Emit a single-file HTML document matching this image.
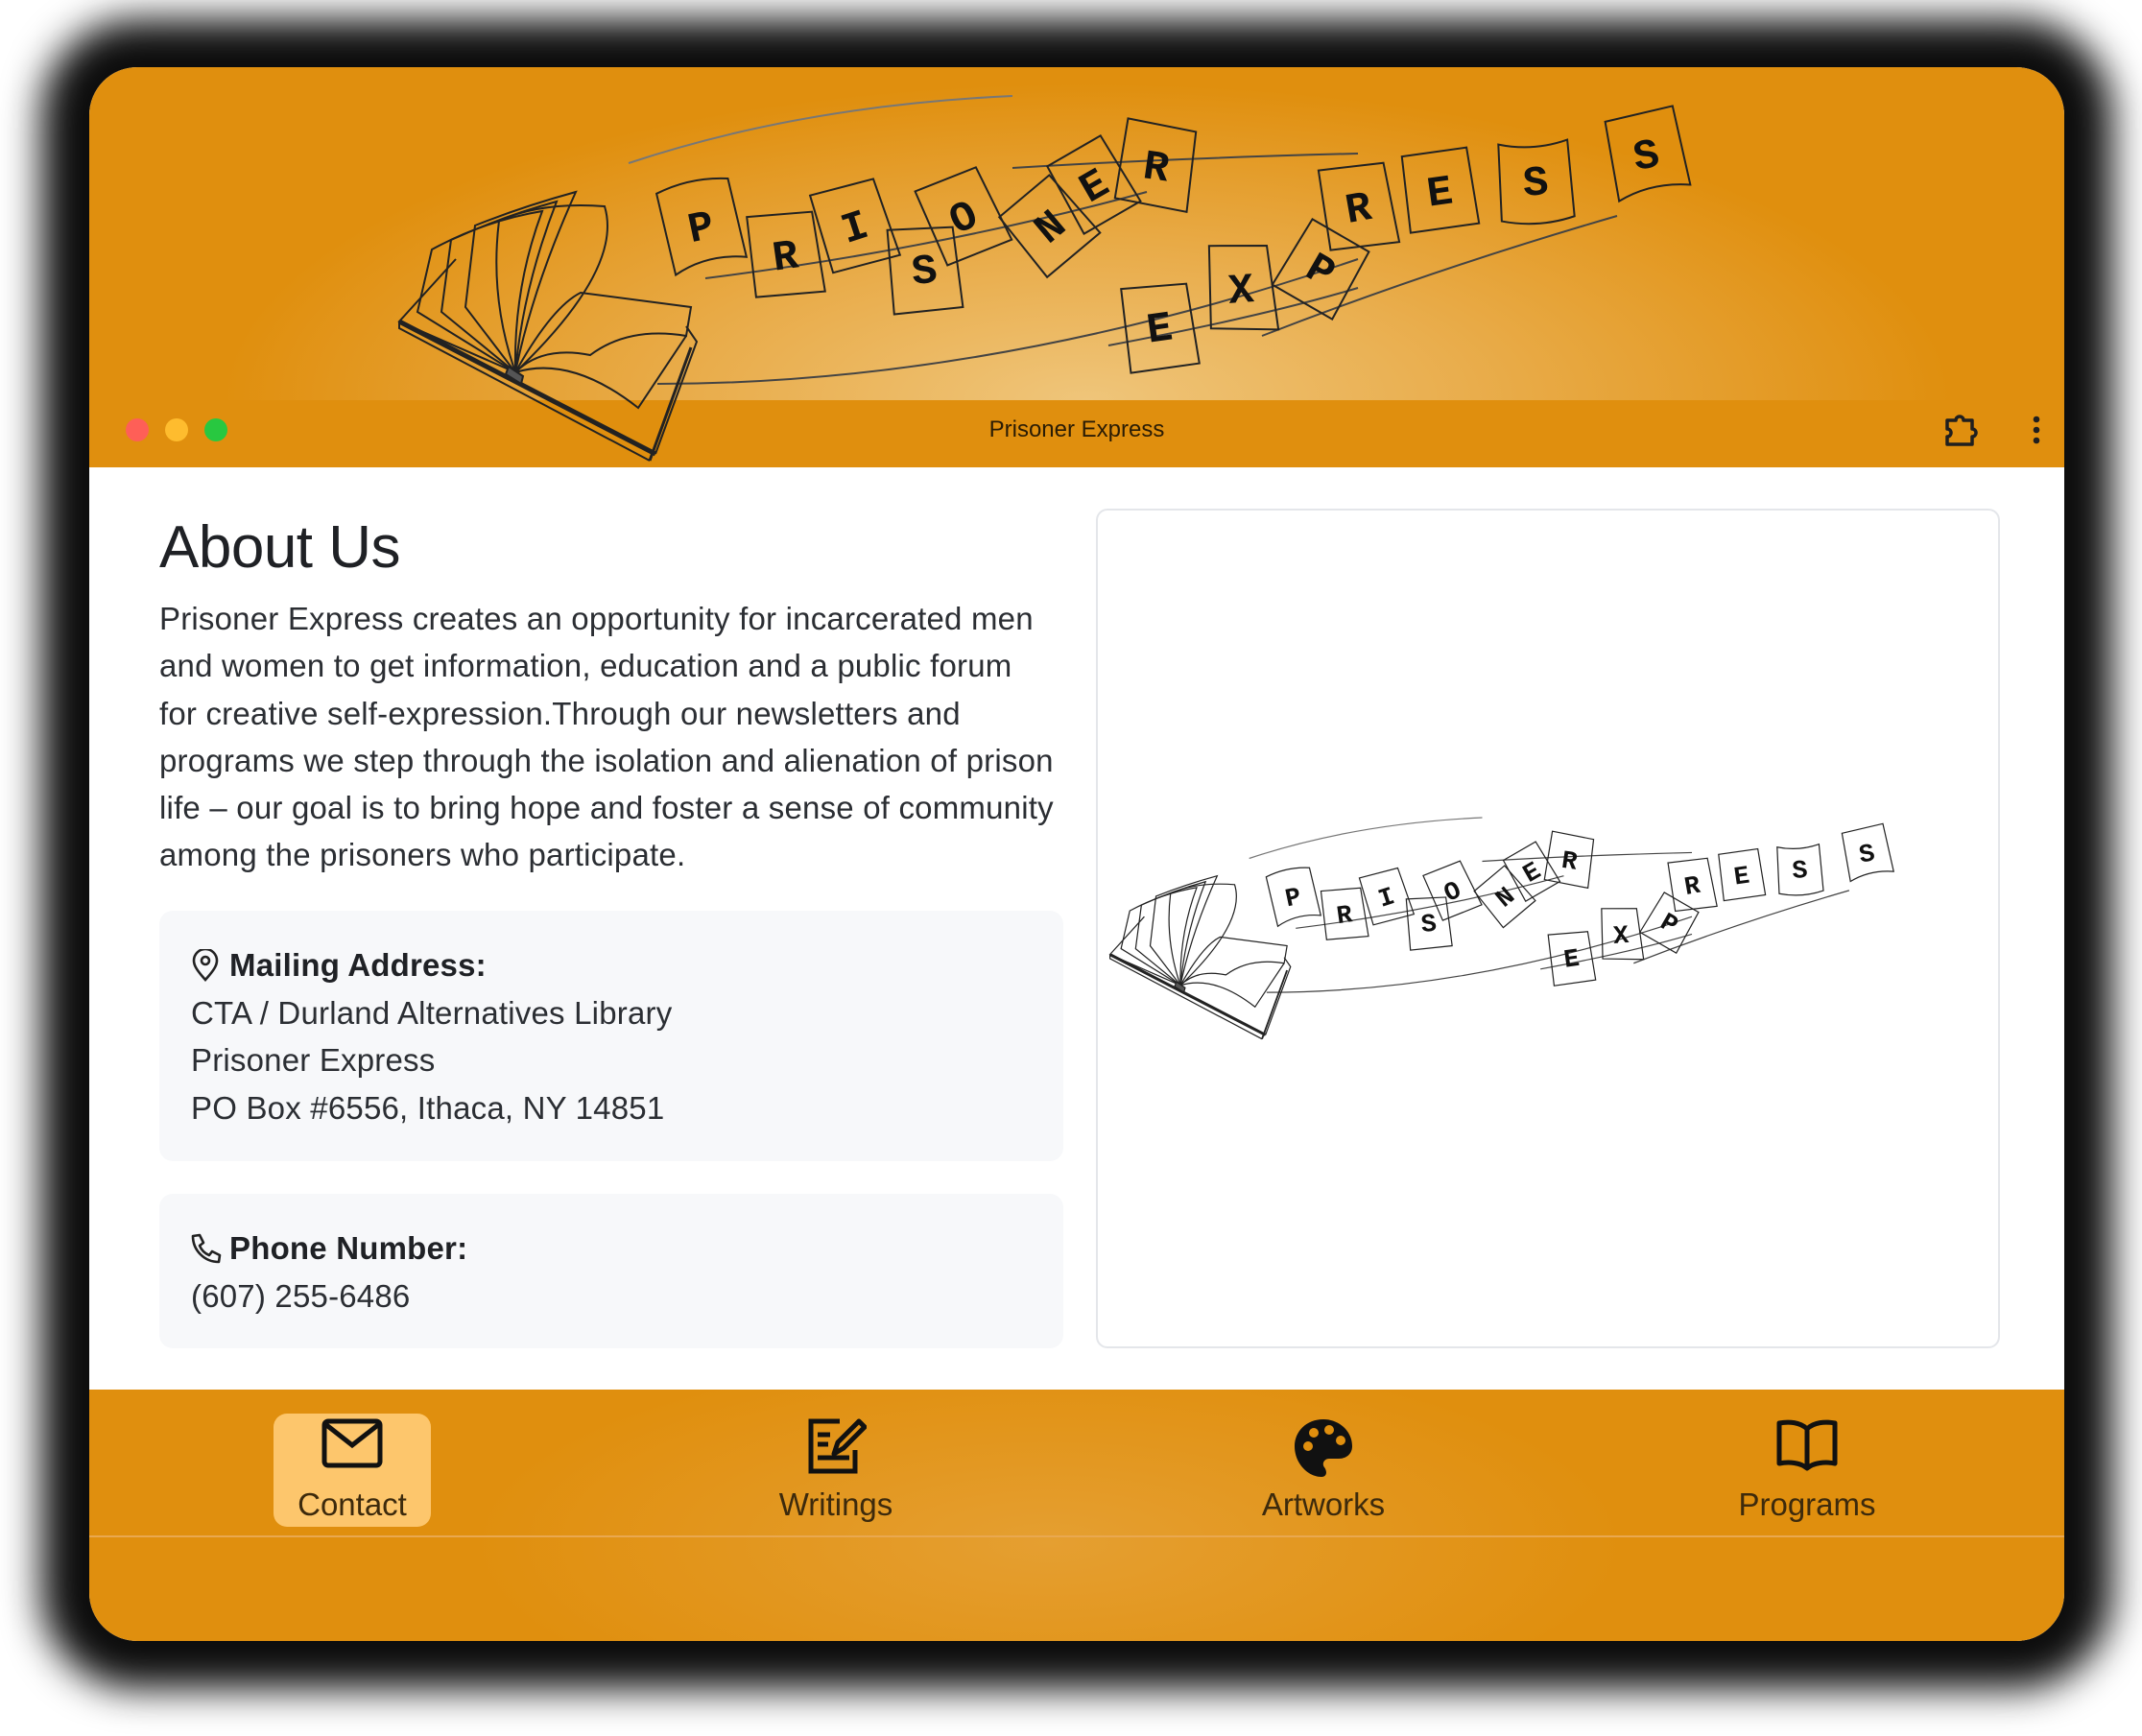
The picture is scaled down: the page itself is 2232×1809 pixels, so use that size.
<!DOCTYPE html>
<html><head><meta charset="utf-8">
<style>
*{margin:0;padding:0;box-sizing:border-box}
html,body{width:2232px;height:1809px;overflow:hidden;background:#fff;font-family:"Liberation Sans",sans-serif}
.win{position:absolute;left:93px;top:70px;width:2058px;height:1640px;border-radius:50px;overflow:hidden;background:#fff;box-shadow:0 0 40px 50px rgba(0,0,0,.95)}
.head{position:absolute;left:0;top:0;width:100%;height:347px;background:radial-gradient(ellipse 900px 330px at 1040px 347px,#efc57a 0%,#e9ad4c 45%,#e08f0e 100%)}
.tbar{position:absolute;left:0;top:347px;width:100%;height:70px;background:#e08f0e}
.dot{position:absolute;top:366px;width:24px;height:24px;border-radius:50%}
.title{position:absolute;top:364px;left:0;width:100%;text-align:center;font-size:24px;color:#2a1c05}
.content{position:absolute;left:0;top:417px;width:100%;height:961px;background:#fff}
h1{position:absolute;left:73px;top:48px;font-size:62px;font-weight:normal;color:#1f2125;letter-spacing:-0.5px}
.para{position:absolute;left:73px;top:133px;font-size:33px;letter-spacing:0.2px;line-height:49.3px;color:#2b2e33;white-space:nowrap}
.card{position:absolute;left:73px;width:942px;background:#f7f8fa;border-radius:14px;font-size:33px;letter-spacing:0.2px;line-height:49.5px;color:#2b2e33;padding-left:33px}
.card b{color:#1f2125}
.img{position:absolute;left:1049px;top:43px;width:942px;height:875px;border:2px solid #e4e6ea;border-radius:12px;background:#fff}
.nav{position:absolute;left:0;top:1378px;width:100%;height:262px;background:radial-gradient(ellipse 600px 200px at 1000px 160px,#e59f31 0%,#e08f0e 100%)}
.navline{position:absolute;left:0;top:152px;width:100%;height:2px;background:#e9a850}
.item{position:absolute;top:25px;width:164px;height:118px;text-align:center}
.item span{position:absolute;left:0;width:100%;top:76px;font-size:33px;color:#3d2a0c}
.item svg{position:absolute;left:50%;top:4px;transform:translateX(-50%)}
</style></head><body>
<svg width="0" height="0" style="position:absolute">
<defs>
<g id="logo" fill="none" stroke="#222" stroke-width="2">
<path d="M240,70 Q420,10 640,0" stroke="#777" stroke-width="2"/>
<path d="M640,75 Q800,65 1000,60" stroke="#444"/>
<path d="M270,300 Q620,300 1000,170" stroke="#444"/>
<path d="M320,190 Q560,160 780,100" stroke="#444"/>
<path d="M740,260 Q900,230 1000,200" stroke="#444"/>
<path d="M900,250 Q1080,180 1270,125" stroke="#444"/>
<path d="M1,235 L268,373" stroke-width="5"/>
<path d="M1,235 L1,242 L262,380"/>
<path d="M268,373 L311,256 L300,240"/>
<path d="M262,380 L305,262" stroke-width="3"/>
<path d="M122,288 Q160,220 190,205 L305,220 L300,250 Q240,240 200,270 Q150,260 122,288 Z"/>
<path d="M122,288 Q180,270 250,325 L300,250"/>
<path d="M122,288 L1,235 L60,170"/>
<path d="M122,288 L20,225 L35,160 Q90,130 150,120 Q120,200 122,288"/>
<path d="M122,288 L45,225 L55,150 Q110,125 165,110 Q130,200 122,288"/>
<path d="M122,288 L70,220 L80,135 Q130,115 185,100 Q140,200 122,288"/>
<path d="M122,288 Q95,210 105,130 Q150,110 215,115 Q235,180 122,288"/>
<path d="M115,282 L130,292 L128,300 L112,290 Z" fill="#555"/>
<g fill="rgba(0,0,0,0)" font-family="Liberation Mono,monospace" font-size="44" font-weight="bold">
<g transform="translate(315,135) rotate(-12)"><path d="M-38,-42 Q0,-52 38,-42 L40,42 Q0,30 -36,45 Z"/><text x="0" y="15" text-anchor="middle" fill="#111" stroke="none">P</text></g>
<g transform="translate(403,165) rotate(-8)"><path d="M-34,-44 L34,-40 L36,44 L-36,40 Z"/><text x="0" y="15" text-anchor="middle" fill="#111" stroke="none">R</text></g>
<g transform="translate(475,135) rotate(-18)"><path d="M-34,-44 L34,-40 L36,44 L-36,40 Z"/><text x="0" y="15" text-anchor="middle" fill="#111" stroke="none">I</text></g>
<g transform="translate(548,180) rotate(-6)"><path d="M-34,-44 L34,-40 L36,44 L-36,44 Z"/><text x="0" y="15" text-anchor="middle" fill="#111" stroke="none">S</text></g>
<g transform="translate(588,125) rotate(-25)"><path d="M-34,-44 L34,-40 L36,44 L-36,40 Z"/><text x="0" y="15" text-anchor="middle" fill="#111" stroke="none">O</text></g>
<g transform="translate(678,135) rotate(-40)"><path d="M-34,-40 L34,-40 L36,40 L-36,40 Z"/><text x="0" y="15" text-anchor="middle" fill="#111" stroke="none">N</text></g>
<g transform="translate(724,92) rotate(-30)"><path d="M-32,-40 L32,-40 L34,40 L-34,40 Z"/><text x="0" y="15" text-anchor="middle" fill="#111" stroke="none">E</text></g>
<g transform="translate(790,72) rotate(8)"><path d="M-36,-44 L36,-40 L38,44 L-38,40 Z"/><text x="0" y="15" text-anchor="middle" fill="#111" stroke="none">R</text></g>
<g transform="translate(793,240) rotate(-8)"><path d="M-34,-44 L34,-40 L36,44 L-36,44 Z"/><text x="0" y="15" text-anchor="middle" fill="#111" stroke="none">E</text></g>
<g transform="translate(878,200) rotate(-4)"><path d="M-30,-46 L30,-42 L36,46 L-34,40 Z"/><text x="0" y="15" text-anchor="middle" fill="#111" stroke="none">X</text></g>
<g transform="translate(962,180) rotate(30)"><path d="M-34,-40 L34,-40 L36,40 L-36,40 Z"/><text x="0" y="15" text-anchor="middle" fill="#111" stroke="none">P</text></g>
<g transform="translate(1000,115) rotate(-10)"><path d="M-34,-44 L34,-40 L36,44 L-36,40 Z"/><text x="0" y="15" text-anchor="middle" fill="#111" stroke="none">R</text></g>
<g transform="translate(1085,98) rotate(-8)"><path d="M-34,-40 L34,-40 L36,40 L-36,40 Z"/><text x="0" y="15" text-anchor="middle" fill="#111" stroke="none">E</text></g>
<g transform="translate(1185,88) rotate(-4)"><path d="M-36,-40 Q0,-30 36,-40 L38,40 Q0,50 -38,40 Z"/><text x="0" y="15" text-anchor="middle" fill="#111" stroke="none">S</text></g>
<g transform="translate(1300,60) rotate(-10)"><path d="M-36,-40 L36,-44 L40,40 Q0,30 -36,44 Z"/><text x="0" y="15" text-anchor="middle" fill="#111" stroke="none">S</text></g>
</g>
</g>
</defs></svg>

<div class="win">
  <div class="head"></div>
  <div class="tbar"></div>
  <svg width="2058" height="417" style="position:absolute;left:0;top:0"><use href="#logo" transform="translate(322,30)"/></svg>
  <div class="dot" style="left:38px;background:#fe5f57"></div>
  <div class="dot" style="left:79px;background:#febc2e"></div>
  <div class="dot" style="left:120px;background:#28c840"></div>
  <div class="title">Prisoner Express</div>
  <svg style="position:absolute;left:1932px;top:360px" width="36" height="36" viewBox="0 0 36 36" fill="none" stroke="#1f1f1f" stroke-width="3.5" stroke-linejoin="round"><path d="M4,8 H13 A4,4 0 0 1 21,8 H30 V17 A4,4 0 0 1 30,25 V33 H4 V25 A3,3 0 0 0 4,17 Z"/></svg>
  <svg style="position:absolute;left:2020px;top:363px" width="18" height="32"><circle cx="9" cy="4" r="3.3" fill="#1f1f1f"/><circle cx="9" cy="15" r="3.3" fill="#1f1f1f"/><circle cx="9" cy="26" r="3.3" fill="#1f1f1f"/></svg>

  <div class="content">
    <h1>About Us</h1>
    <div class="para">Prisoner Express creates an opportunity for incarcerated men<br>and women to get information, education and a public forum<br>for creative self-expression.Through our newsletters and<br>programs we step through the isolation and alienation of prison<br>life – our goal is to bring hope and foster a sense of community<br>among the prisoners who participate.</div>
    <div class="card" style="top:462px;height:261px;padding-top:32px">
      <svg width="30" height="34" viewBox="0 0 30 34" style="position:absolute;left:33px;top:40px" fill="none" stroke="#222" stroke-width="2.6"><path d="M15,32 C6,22 3,17 3,12 A12,12 0 0 1 27,12 C27,17 24,22 15,32 Z"/><circle cx="15" cy="12" r="4"/></svg>
      <div style="padding-left:40px"><b>Mailing Address:</b></div>
      CTA / Durland Alternatives Library<br>Prisoner Express<br>PO Box #6556, Ithaca, NY 14851
    </div>
    <div class="card" style="top:757px;height:161px;padding-top:32px">
      <svg width="34" height="34" viewBox="0 0 34 34" style="position:absolute;left:31px;top:40px" fill="none" stroke="#222" stroke-width="2.6" stroke-linejoin="round"><path d="M4,4 L11,3 L15,11 L11,14 C13,19 16,22 21,24 L24,20 L32,24 L31,31 C16,31 4,19 4,4 Z"/></svg>
      <div style="padding-left:40px"><b>Phone Number:</b></div>
      (607) 255-6486
    </div>
    <div class="img">
      <svg width="940" height="870" style="position:absolute;left:0;top:0"><use href="#logo" transform="translate(12,320) scale(0.607)"/></svg>
    </div>
  </div>

  <div class="nav">
    <div class="item" style="left:192px;background:#fdc66c;border-radius:14px">
      <svg width="64" height="54" viewBox="0 0 64 54" fill="none" stroke="#111" stroke-width="5"><rect x="3" y="4" width="58" height="46" rx="4"/><path d="M4,7 L32,29 L60,7"/></svg>
      <span>Contact</span>
    </div>
    <div class="item" style="left:696px">
      <svg width="64" height="60" viewBox="0 0 64 60" fill="none" stroke="#111" stroke-width="5"><path d="M36,4 H6 V56 H52 V34"/><path d="M13,42 H46 M13,18 H26 M13,28 H24"/><path d="M30,38 L34,26 L56,4 L62,10 L40,32 Z" stroke-linejoin="round"/></svg>
      <span>Writings</span>
    </div>
    <div class="item" style="left:1204px">
      <svg width="64" height="64" viewBox="0 0 64 64"><path d="M32,2 C14,2 2,15 2,30 C2,48 16,62 30,62 C36,62 36,56 33,52 C30,48 33,43 38,43 H48 C56,43 62,38 62,30 C62,14 48,2 32,2 Z" fill="#111"/><circle cx="16" cy="30" r="5" fill="#e08f0e"/><circle cx="22" cy="16" r="5" fill="#e08f0e"/><circle cx="38" cy="13" r="5" fill="#e08f0e"/><circle cx="50" cy="24" r="5" fill="#e08f0e"/></svg>
      <span>Artworks</span>
    </div>
    <div class="item" style="left:1708px">
      <svg width="66" height="56" viewBox="0 0 66 56" fill="none" stroke="#111" stroke-width="5" stroke-linejoin="round"><path d="M33,12 C26,5 14,4 4,6 V48 C14,46 26,47 33,53 C40,47 52,46 62,48 V6 C52,4 40,5 33,12 Z M33,12 V53"/></svg>
      <span>Programs</span>
    </div>
    <div class="navline"></div>
  </div>
</div>
</body></html>
